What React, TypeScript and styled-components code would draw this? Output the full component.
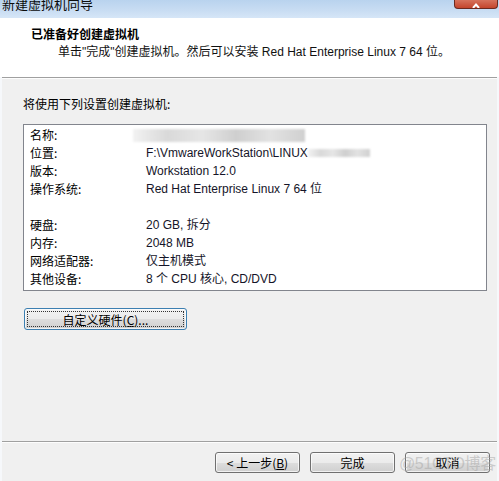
import React from 'react'
import styled, { createGlobalStyle } from 'styled-components'

const GlobalStyle = createGlobalStyle`
  html, body {
    margin: 0;
    padding: 0;
    background: #f0f0f0;
  }
  body {
    font-family: "Liberation Sans", "Noto Sans CJK SC", sans-serif;
    font-size: 12px;
    color: #000;
  }
`

const Window = styled.div`
  position: relative;
  width: 499px;
  height: 481px;
  display: flex;
  flex-direction: column;
  overflow: hidden;
  background: #f0f0f0;
`

const TitleBar = styled.div`
  height: 18px;
  display: flex;
  align-items: flex-start;
  background: linear-gradient(180deg, #b9d3ee 0%, #c9ddf3 60%, #d6e6f7 100%);
  flex-shrink: 0;
`

const TitleText = styled.span`
  margin: -3px 0 0 2px;
  font-family: "Noto Sans CJK SC", sans-serif;
  font-size: 13px;
  line-height: 14px;
  color: #0b0b0b;
`

const CloseButton = styled.div`
  margin-left: auto;
  margin-right: 1px;
  width: 44px;
  height: 9px;
  border: 1px solid #6b2a20;
  border-top: none;
  border-radius: 0 0 4px 4px;
  background: linear-gradient(180deg, #d6725c 0%, #c4452c 100%);
  display: flex;
  justify-content: center;
  overflow: hidden;
  box-sizing: border-box;
`

const Frame = styled.div`
  flex: 1;
  display: flex;
  flex-direction: column;
  border-left: 2px solid #f6f8fb;
  border-right: 2px solid #f6f8fb;
`

const Header = styled.div`
  height: 59px;
  background: #fff;
  padding: 7px 0 0 29px;
  box-sizing: border-box;
  margin-left: -2px;
  margin-right: -2px;
`

const HeaderTitle = styled.div`
  font-family: "Noto Sans CJK SC", sans-serif;
  font-weight: bold;
  font-size: 12px;
  line-height: 17px;
  padding-left: 2px;
`

const HeaderSub = styled.div`
  margin-top: 2px;
  padding-left: 29px;
  line-height: 17px;
  font-size: 12px;
  color: #111;
`

const Divider = styled.div`
  height: 1px;
  background: #a0a0a0;
  border-bottom: 1px solid #fdfdfd;
`

const Body = styled.div`
  flex: 1;
  padding: 16px 0 0 21px;
  display: flex;
  flex-direction: column;
  align-items: flex-start;
`

const Intro = styled.div`
  font-family: "Noto Sans CJK SC", sans-serif;
  line-height: 17px;
`

const SummaryBox = styled.div`
  margin-top: 12px;
  width: 464px;
  box-sizing: border-box;
  border: 1px solid #82858d;
  background: #fff;
  padding: 1px 0 2px 6px;
`

const Row = styled.div`
  display: grid;
  grid-template-columns: 116px 1fr;
  height: 18px;
  line-height: 18px;
  white-space: nowrap;
`

const Label = styled.span`
  font-family: "Noto Sans CJK SC", sans-serif;
`

const Value = styled.span`
  color: #141428;
  display: flex;
  align-items: center;
`

const Smudge = styled.span<{ $w: number; $h: number; $shift?: number }>`
  display: inline-block;
  width: ${p => p.$w}px;
  height: ${p => p.$h}px;
  margin-left: ${p => p.$shift ?? 0}px;
  background: linear-gradient(90deg, #f2f2f2 0%, #d9d9d9 20%, #e6e6e6 40%, #cfcfcf 60%, #e2e2e2 80%, #d0d0d0 100%);
  filter: blur(1.2px);
`

const WinButton = styled.button<{ $focused?: boolean }>`
  position: relative;
  height: 21px;
  width: 85px;
  padding: 0;
  border: 1px solid ${p => (p.$focused ? '#3c7fb1' : '#707070')};
  border-radius: 3px;
  background: linear-gradient(180deg, #f2f2f2 0%, #ebebeb 50%, #dddddd 51%, #cfcfcf 100%);
  font-family: "Noto Sans CJK SC", sans-serif;
  font-size: 12px;
  line-height: 19px;
  color: #000;
  box-shadow: inset 0 0 0 1px rgba(255, 255, 255, 0.7);
`

const FocusRing = styled.span`
  position: absolute;
  inset: 2px;
  border: 1px dotted #333;
  pointer-events: none;
`

const CustomizeButton = styled(WinButton)`
  margin-top: 17px;
  margin-left: 1px;
  width: 163px;
  height: 22px;
`

const Footer = styled.div`
  height: 38px;
  display: flex;
  justify-content: flex-end;
  align-items: flex-start;
  gap: 10px;
  padding: 9px 7px 0 0;
  box-sizing: border-box;
`

const Watermark = styled.span`
  position: absolute;
  right: 3px;
  bottom: 7px;
  font-family: "Liberation Sans", "Noto Sans CJK SC", sans-serif;
  font-size: 16px;
  color: rgba(165, 165, 165, 0.5);
  pointer-events: none;
  letter-spacing: -0.3px;
`

const rows: Array<[string, React.ReactNode] | null> = [
  ['名称:', <Smudge $w={172} $h={13} $shift={-13} />],
  ['位置:', <>F:\VmwareWorkStation\LINUX<Smudge $w={62} $h={8} /></>],
  ['版本:', 'Workstation 12.0'],
  ['操作系统:', 'Red Hat Enterprise Linux 7 64 位'],
  null,
  ['硬盘:', '20 GB, 拆分'],
  ['内存:', '2048 MB'],
  ['网络适配器:', '仅主机模式'],
  ['其他设备:', '8 个 CPU 核心, CD/DVD'],
]

export default function App() {
  return (
    <Window>
      <GlobalStyle />
      <TitleBar>
        <TitleText>新建虚拟机向导</TitleText>
        <CloseButton>
          <svg width="12" height="8" viewBox="0 0 12 8">
            <path d="M3 8 L6 4.5 L9 8" stroke="#fff" strokeWidth="2" fill="none" />
          </svg>
        </CloseButton>
      </TitleBar>
      <Frame>
        <Header>
          <HeaderTitle>已准备好创建虚拟机</HeaderTitle>
          <HeaderSub>单击"完成"创建虚拟机。然后可以安装 Red Hat Enterprise Linux 7 64 位。</HeaderSub>
        </Header>
        <Divider />
        <Body>
          <Intro>将使用下列设置创建虚拟机:</Intro>
          <SummaryBox>
            {rows.map((r, i) =>
              r ? (
                <Row key={i}>
                  <Label>{r[0]}</Label>
                  <Value>{r[1]}</Value>
                </Row>
              ) : (
                <Row key={i} />
              )
            )}
          </SummaryBox>
          <CustomizeButton $focused>
            <FocusRing />
            自定义硬件(<u>C</u>)...
          </CustomizeButton>
        </Body>
        <Divider />
        <Footer>
          <WinButton>&lt; 上一步(<u>B</u>)</WinButton>
          <WinButton>完成</WinButton>
          <WinButton>取消</WinButton>
        </Footer>
      </Frame>
      <Watermark>@51CTO博客</Watermark>
    </Window>
  )
}
